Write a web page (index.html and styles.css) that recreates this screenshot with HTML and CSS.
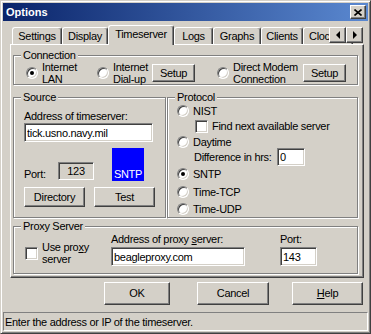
FILE: index.html
```html
<!DOCTYPE html>
<html lang="en">
<head>
    <meta charset="UTF-8">
    <title>Options</title>
    <link rel="stylesheet" href="styles.css">
</head>
<body>
    <div class="window">
        <div class="titlebar">
            <span class="title">Options</span>
            <span class="close-btn">
                <svg width="8" height="7" viewBox="0 0 8 7"><path d="M0.5 0.5L7.5 6.5M7.5 0.5L0.5 6.5" stroke="#000" stroke-width="1.6" fill="none"/></svg>
            </span>
        </div>

        <div class="tabs">
            <div class="tab tab-settings">Settings</div>
            <div class="tab tab-display">Display</div>
            <div class="tab tab-timeserver active">Timeserver</div>
            <div class="tab tab-logs">Logs</div>
            <div class="tab tab-graphs">Graphs</div>
            <div class="tab tab-clients">Clients</div>
            <div class="tab tab-clock">Clock</div>
            <div class="tab-arrows">
                <span class="arrow-btn"><i class="arrow-left"></i></span>
                <span class="arrow-btn"><i class="arrow-right"></i></span>
            </div>
        </div>

        <div class="panel">
            <fieldset class="group">
                <legend>Connection</legend>
                <div class="conn-row">
                    <label class="opt opt-lan"><span class="radio checked"></span><span class="opt-text">Internet<br>LAN</span></label>
                    <label class="opt opt-dialup"><span class="radio"></span><span class="opt-text">Internet<br>Dial-up</span></label>
                    <button class="btn btn-setup">Setup</button>
                    <label class="opt opt-modem"><span class="radio"></span><span class="opt-text">Direct Modem<br>Connection</span></label>
                    <button class="btn btn-setup">Setup</button>
                </div>
            </fieldset>

            <div class="middle">
                <fieldset class="group group-source">
                    <legend>Source</legend>
                    <div class="source-body">
                        <div>Address of timeserver:</div>
                        <input class="field field-server" type="text" value="tick.usno.navy.mil">
                        <div class="port-row">
                            <span class="port-label">Port:</span>
                            <span class="port-box">123</span>
                            <span class="sntp-box">SNTP</span>
                        </div>
                        <div class="src-buttons">
                            <button class="btn btn-src">Directory</button>
                            <button class="btn btn-src">Test</button>
                        </div>
                    </div>
                </fieldset>

                <fieldset class="group group-protocol">
                    <legend>Protocol</legend>
                    <div class="protocol-body">
                        <label class="row r-nist"><span class="radio"></span>NIST</label>
                        <label class="row r-find"><span class="check"></span>Find next available server</label>
                        <label class="row r-daytime"><span class="radio"></span>Daytime</label>
                        <div class="row r-diff">
                            <span class="diff-label">Difference in hrs:</span>
                            <input class="field field-diff" type="text" value="0">
                        </div>
                        <label class="row r-sntp"><span class="radio checked"></span>SNTP</label>
                        <label class="row r-tcp"><span class="radio"></span>Time-TCP</label>
                        <label class="row r-udp"><span class="radio"></span>Time-UDP</label>
                    </div>
                </fieldset>
            </div>

            <fieldset class="group">
                <legend>Proxy Server</legend>
                <div class="proxy-body">
                    <label class="proxy-use"><span class="check"></span><span class="opt-text">Use pro<u>x</u>y<br>server</span></label>
                    <div>
                        <div>Address of proxy <u>s</u>erver:</div>
                        <input class="field field-proxy" type="text" value="beagleproxy.com">
                    </div>
                    <div>
                        <div>Port:</div>
                        <input class="field field-port" type="text" value="143">
                    </div>
                </div>
            </fieldset>
        </div>

        <div class="dialog-buttons">
            <button class="btn btn-dlg btn-ok">OK</button>
            <button class="btn btn-dlg btn-cancel">Cancel</button>
            <button class="btn btn-dlg btn-help"><u>H</u>elp</button>
        </div>

        <div class="statusbar">Enter the address or IP of the timeserver.</div>
    </div>
</body>
</html>
```

FILE: styles.css
```css
* {
    box-sizing: border-box;
}
body {
    margin: 0;
    font-family: "Liberation Sans", Arial, sans-serif;
    font-size: 11px;
    line-height: 13px;
    letter-spacing: -0.3px;
    color: #000;
    background: #d4d0c8;
}
.window {
    width: 371px;
    height: 334px;
    padding: 2px;
    display: flex;
    flex-direction: column;
    background: #d4d0c8;
    border: 1px solid;
    border-color: #d4d0c8 #404040 #404040 #d4d0c8;
    box-shadow: inset 1px 1px #fff, inset -1px -1px #808080;
}

/* title bar */
.titlebar {
    height: 18px;
    flex: none;
    display: flex;
    align-items: center;
    justify-content: space-between;
    padding: 0 2px 0 3px;
    background: linear-gradient(to right, #0a246a, #5a88d0);
    color: #fff;
}
.title {
    font-weight: bold;
    letter-spacing: 0;
}
.close-btn {
    width: 16px;
    height: 14px;
    display: flex;
    align-items: center;
    justify-content: center;
    background: #d4d0c8;
    border: 1px solid;
    border-color: #fff #404040 #404040 #fff;
    box-shadow: inset -1px -1px #808080;
}

/* tabs */
.tabs {
    position: relative;
    height: 19px;
    flex: none;
    margin: 4px 4px 0 7px;
    padding-left: 2px;
    display: flex;
    align-items: flex-end;
}
.tab {
    height: 17px;
    display: flex;
    justify-content: center;
    padding-top: 2px;
    white-space: nowrap;
    overflow: hidden;
    background: #d4d0c8;
    border: 1px solid;
    border-bottom: 0;
    border-color: #fff #404040 #404040 #fff;
    border-radius: 3px 3px 0 0;
    box-shadow: inset -1px 0 #808080;
}
.tab.active {
    height: 20px;
    margin-bottom: -1px;
    position: relative;
    z-index: 2;
}
.tab-settings { width: 50px; }
.tab-display { width: 46px; }
.tab-timeserver { width: 66px; }
.tab-logs { width: 39px; }
.tab-graphs { width: 48px; }
.tab-clients { width: 42px; }
.tab-clock {
    width: 50px;
    justify-content: flex-start;
    padding-left: 5px;
}
.tab-arrows {
    position: absolute;
    right: 1px;
    top: 2px;
    z-index: 3;
    display: flex;
}
.arrow-btn {
    width: 17px;
    height: 16px;
    display: flex;
    align-items: center;
    justify-content: center;
    background: #d4d0c8;
    border: 1px solid;
    border-color: #fff #404040 #404040 #fff;
    box-shadow: inset -1px -1px #808080;
}
.arrow-left {
    border-right: 4px solid #000;
    border-top: 4px solid transparent;
    border-bottom: 4px solid transparent;
}
.arrow-right {
    border-left: 4px solid #000;
    border-top: 4px solid transparent;
    border-bottom: 4px solid transparent;
}

/* tab page */
.panel {
    height: 234px;
    flex: none;
    margin: 0 4px 0 7px;
    padding: 4px 5px 3px 2px;
    display: flex;
    flex-direction: column;
    border: 1px solid;
    border-color: #fff #404040 #404040 #fff;
    box-shadow: inset -1px -1px #808080;
}
.group {
    margin: 0;
    padding: 0;
    min-width: 0;
    border: 1px solid #808080;
    box-shadow: 1px 1px 0 #fff, inset 1px 1px 0 #fff;
}
.group legend {
    margin-left: 7px;
    padding: 0 2px;
    line-height: 13px;
    background: #d4d0c8;
}

/* controls */
.btn {
    font: inherit;
    letter-spacing: inherit;
    color: #000;
    margin: 0;
    padding: 0;
    display: flex;
    align-items: center;
    justify-content: center;
    background: #d4d0c8;
    border: 1px solid;
    border-color: #fff #404040 #404040 #fff;
    box-shadow: inset -1px -1px #808080;
}
.field {
    display: block;
    font: inherit;
    letter-spacing: inherit;
    color: #000;
    margin: 0;
    padding: 0 0 0 2px;
    background: #fff;
    outline: none;
    border: 1px solid;
    border-color: #808080 #fff #fff #808080;
    box-shadow: inset 1px 1px #404040, inset -1px -1px #d4d0c8;
}
.radio {
    position: relative;
    width: 12px;
    height: 12px;
    flex: none;
    border-radius: 50%;
    background: #fff;
    border: 1px solid;
    border-color: #808080 #fff #fff #808080;
    box-shadow: inset 1px 1px #404040, inset -1px -1px #d4d0c8;
}
.radio.checked::after {
    content: "";
    position: absolute;
    left: 3px;
    top: 3px;
    width: 4px;
    height: 4px;
    border-radius: 50%;
    background: #000;
}
.check {
    width: 13px;
    height: 13px;
    flex: none;
    background: #fff;
    border: 1px solid;
    border-color: #808080 #fff #fff #808080;
    box-shadow: inset 1px 1px #404040, inset -1px -1px #d4d0c8;
}
.opt {
    display: flex;
    align-items: center;
    gap: 4px;
    white-space: nowrap;
}
.opt-text {
    line-height: 12px;
}

/* connection */
.conn-row {
    height: 22px;
    display: flex;
    align-items: center;
    padding-left: 12px;
}
.opt-lan { width: 71px; }
.opt-dialup { width: 55px; }
.opt-modem {
    width: 86px;
    margin-left: 22px;
}
.btn-setup {
    width: 43px;
    height: 18px;
}

/* source + protocol */
.middle {
    display: flex;
    margin: 6px 0 2px;
}
.group-source {
    width: 153px;
    flex: none;
}
.group-protocol {
    flex: 1;
    margin-left: 1px;
}
.source-body {
    padding: 6px 10px 10px;
}
.field-server {
    width: 129px;
    height: 19px;
}
.port-row {
    height: 33px;
    margin-top: 6px;
    display: flex;
    align-items: flex-end;
}
.port-label {
    width: 34px;
}
.port-box {
    width: 36px;
    height: 18px;
    margin-bottom: 1px;
    display: flex;
    align-items: center;
    justify-content: center;
    border: 1px solid;
    border-color: #808080 #fff #fff #808080;
    box-shadow: inset 1px 1px #404040, inset -1px -1px #d4d0c8;
}
.sntp-box {
    width: 32px;
    height: 33px;
    margin-left: 18px;
    display: flex;
    align-items: flex-end;
    justify-content: center;
    background: #0000ff;
    color: #fff;
}
.src-buttons {
    display: flex;
    gap: 9px;
    margin-top: 6px;
}
.btn-src {
    width: 62px;
    height: 20px;
}
.protocol-body {
    padding-left: 9px;
}
.row {
    display: flex;
    align-items: center;
    gap: 4px;
    white-space: nowrap;
}
.r-nist { height: 14px; }
.r-find {
    height: 16px;
    padding-left: 18px;
}
.r-daytime { height: 16px; }
.r-diff {
    height: 18px;
    margin-top: -2px;
    padding-left: 17px;
    gap: 2px;
}
.diff-label {
    width: 81px;
}
.field-diff {
    width: 28px;
    height: 18px;
}
.r-sntp { height: 16px; }
.r-tcp { height: 20px; }
.r-udp { height: 14px; }

/* proxy */
.proxy-body {
    display: grid;
    grid-template-columns: 86px 169px 1fr;
    padding: 0 0 7px 11px;
}
.proxy-use {
    display: flex;
    align-items: center;
    gap: 4px;
    align-self: end;
    margin-bottom: 1px;
}
.field-proxy {
    width: 134px;
    height: 19px;
    margin-top: 1px;
}
.field-port {
    width: 37px;
    height: 19px;
    margin-top: 1px;
}

/* bottom */
.dialog-buttons {
    display: flex;
    justify-content: flex-end;
    margin-top: 4px;
    padding-right: 5px;
}
.btn-dlg {
    height: 23px;
}
.btn-ok { width: 66px; }
.btn-cancel {
    width: 72px;
    margin-left: 27px;
}
.btn-help {
    width: 71px;
    margin-left: 23px;
}
.statusbar {
    height: 19px;
    flex: none;
    margin-top: 7px;
    padding: 3px 0 0 1px;
    white-space: nowrap;
    border: 1px solid;
    border-color: #808080 #fff #fff #808080;
}
```
